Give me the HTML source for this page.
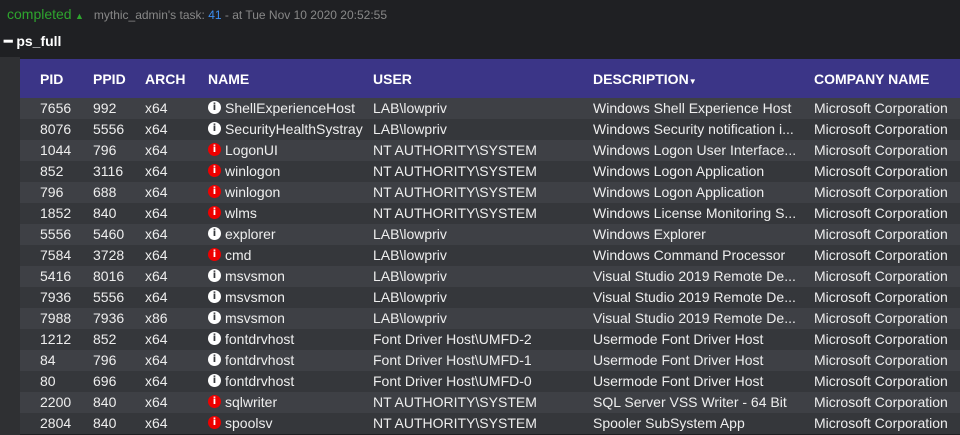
<!DOCTYPE html><html><head><style>
body{margin:0;width:960px;height:435px;overflow:hidden;background:#1f2023;font-family:"Liberation Sans",sans-serif;position:relative}
.top{position:absolute;left:7px;top:6px;font-size:12px;color:#888}
.top .c{color:#2ea52e;font-size:14px}
.t2{position:absolute;left:4px;top:33px;color:#fff;font-weight:bold;font-size:14px}
.gut{position:absolute;left:0;top:57px;width:20px;height:378px;background:#2f3033}
.wrap{position:absolute;left:20px;top:59px;width:940px}
table{border-collapse:collapse;width:940px;font-size:14px;color:#eee;table-layout:fixed}
th{background:#3b3587;color:#fff;text-align:left;height:39px;font-size:14px;padding:0;white-space:nowrap}
td{height:21px;line-height:21px;padding:0;white-space:nowrap;overflow:hidden;vertical-align:middle}
tr:nth-child(odd) td{background:#35373b}
tr:nth-child(even) td{background:#3e4045}
.i{display:inline-block;width:13px;height:13px;border-radius:50%;background:#fff;color:#35373b;font-size:10px;font-weight:bold;text-align:center;line-height:13px;vertical-align:middle;margin:-3px 4px 0 0;font-family:"DejaVu Sans",sans-serif}
.r{background:#e00;color:#fff}
</style></head><body>
<div class="top"><span class="c">completed</span> <span style="color:#2ea52e;font-size:9px">▲</span>&nbsp;&nbsp; mythic_admin's task: <span style="color:#3d8ef0">41</span> - at Tue Nov 10 2020 20:52:55</div>
<div class="t2">━ ps_full</div>
<div class="gut"></div>
<div class="wrap"><table>
<colgroup><col style="width:20px"><col style="width:53px"><col style="width:52px"><col style="width:63px"><col style="width:165px"><col style="width:220px"><col style="width:221px"><col style="width:146px"></colgroup>
<tr><th></th><th>PID</th><th>PPID</th><th>ARCH</th><th>NAME</th><th>USER</th><th>DESCRIPTION<span style="font-size:8px">▼</span></th><th>COMPANY NAME</th></tr>
<tr><td></td><td>7656</td><td>992</td><td>x64</td><td><span class="i">i</span>ShellExperienceHost</td><td>LAB\lowpriv</td><td>Windows Shell Experience Host</td><td>Microsoft Corporation</td></tr>
<tr><td></td><td>8076</td><td>5556</td><td>x64</td><td><span class="i">i</span>SecurityHealthSystray</td><td>LAB\lowpriv</td><td>Windows Security notification i...</td><td>Microsoft Corporation</td></tr>
<tr><td></td><td>1044</td><td>796</td><td>x64</td><td><span class="i r">i</span>LogonUI</td><td>NT AUTHORITY\SYSTEM</td><td>Windows Logon User Interface...</td><td>Microsoft Corporation</td></tr>
<tr><td></td><td>852</td><td>3116</td><td>x64</td><td><span class="i r">i</span>winlogon</td><td>NT AUTHORITY\SYSTEM</td><td>Windows Logon Application</td><td>Microsoft Corporation</td></tr>
<tr><td></td><td>796</td><td>688</td><td>x64</td><td><span class="i r">i</span>winlogon</td><td>NT AUTHORITY\SYSTEM</td><td>Windows Logon Application</td><td>Microsoft Corporation</td></tr>
<tr><td></td><td>1852</td><td>840</td><td>x64</td><td><span class="i r">i</span>wlms</td><td>NT AUTHORITY\SYSTEM</td><td>Windows License Monitoring S...</td><td>Microsoft Corporation</td></tr>
<tr><td></td><td>5556</td><td>5460</td><td>x64</td><td><span class="i">i</span>explorer</td><td>LAB\lowpriv</td><td>Windows Explorer</td><td>Microsoft Corporation</td></tr>
<tr><td></td><td>7584</td><td>3728</td><td>x64</td><td><span class="i r">i</span>cmd</td><td>LAB\lowpriv</td><td>Windows Command Processor</td><td>Microsoft Corporation</td></tr>
<tr><td></td><td>5416</td><td>8016</td><td>x64</td><td><span class="i">i</span>msvsmon</td><td>LAB\lowpriv</td><td>Visual Studio 2019 Remote De...</td><td>Microsoft Corporation</td></tr>
<tr><td></td><td>7936</td><td>5556</td><td>x64</td><td><span class="i">i</span>msvsmon</td><td>LAB\lowpriv</td><td>Visual Studio 2019 Remote De...</td><td>Microsoft Corporation</td></tr>
<tr><td></td><td>7988</td><td>7936</td><td>x86</td><td><span class="i">i</span>msvsmon</td><td>LAB\lowpriv</td><td>Visual Studio 2019 Remote De...</td><td>Microsoft Corporation</td></tr>
<tr><td></td><td>1212</td><td>852</td><td>x64</td><td><span class="i">i</span>fontdrvhost</td><td>Font Driver Host\UMFD-2</td><td>Usermode Font Driver Host</td><td>Microsoft Corporation</td></tr>
<tr><td></td><td>84</td><td>796</td><td>x64</td><td><span class="i">i</span>fontdrvhost</td><td>Font Driver Host\UMFD-1</td><td>Usermode Font Driver Host</td><td>Microsoft Corporation</td></tr>
<tr><td></td><td>80</td><td>696</td><td>x64</td><td><span class="i">i</span>fontdrvhost</td><td>Font Driver Host\UMFD-0</td><td>Usermode Font Driver Host</td><td>Microsoft Corporation</td></tr>
<tr><td></td><td>2200</td><td>840</td><td>x64</td><td><span class="i r">i</span>sqlwriter</td><td>NT AUTHORITY\SYSTEM</td><td>SQL Server VSS Writer - 64 Bit</td><td>Microsoft Corporation</td></tr>
<tr><td></td><td>2804</td><td>840</td><td>x64</td><td><span class="i r">i</span>spoolsv</td><td>NT AUTHORITY\SYSTEM</td><td>Spooler SubSystem App</td><td>Microsoft Corporation</td></tr>
</table></div>
</body></html>
